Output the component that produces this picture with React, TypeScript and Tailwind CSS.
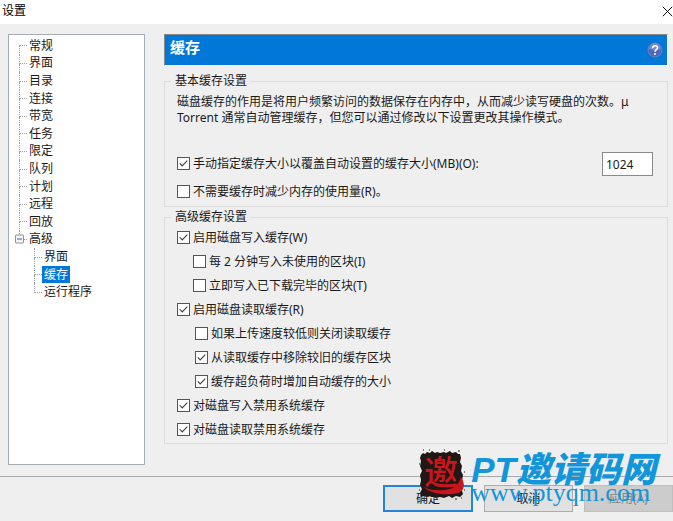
import React, { useState } from "react";

type TreeItem = {
  label: string;
  child?: boolean;
  expandable?: boolean;
  last?: boolean;
};

const treeItems: TreeItem[] = [
  { label: "常规" },
  { label: "界面" },
  { label: "目录" },
  { label: "连接" },
  { label: "带宽" },
  { label: "任务" },
  { label: "限定" },
  { label: "队列" },
  { label: "计划" },
  { label: "远程" },
  { label: "回放" },
  { label: "高级", expandable: true, last: true },
  { label: "界面", child: true },
  { label: "缓存", child: true },
  { label: "运行程序", child: true, last: true },
];

const TreeRow: React.FC<{
  item: TreeItem;
  selected: boolean;
  first: boolean;
  onSelect: () => void;
}> = ({ item, selected, first, onSelect }) => (
  <li className={`flex items-center ${item.child ? "pl-[15px]" : ""}`}>
    {/* Dotted connector lines */}
    <span className="relative flex h-full w-2 flex-col">
      <span
        className={`flex-1 border-b border-dotted border-[#a0a0a0] ${
          first ? "" : "border-l"
        }`}
      />
      <span
        className={`flex-1 border-dotted border-[#a0a0a0] ${
          item.last ? "" : "border-l"
        }`}
      />
      {item.expandable && (
        <span className="absolute top-1/2 -left-1 flex size-[9px] -translate-y-1/2 items-center justify-center rounded-[1px] border border-[#919191] bg-[#f4f4f4]">
          <span className="h-px w-[5px] bg-[#4b63a7]" />
        </span>
      )}
    </span>
    <button
      type="button"
      onClick={onSelect}
      className={`h-full px-[2px] leading-4 ${
        selected ? "bg-[#0078d7] text-white" : ""
      }`}
    >
      {item.label}
    </button>
  </li>
);

const CheckRow: React.FC<{
  id: string;
  label: string;
  checked?: boolean;
}> = ({ id, label, checked = false }) => (
  <div className="flex h-6 items-center gap-[3px]">
    <span className="grid shrink-0 pb-[2px]">
      <input
        id={id}
        type="checkbox"
        defaultChecked={checked}
        className="peer col-start-1 row-start-1 size-[13px] appearance-none border border-[#555555] bg-white"
      />
      <svg
        viewBox="0 0 13 13"
        className="pointer-events-none invisible col-start-1 row-start-1 size-[13px] peer-checked:visible"
      >
        <path
          d="M2.8 6.4 5.2 8.9 10.3 3.6"
          fill="none"
          stroke="#444"
          strokeWidth="1.2"
        />
      </svg>
    </span>
    <label htmlFor={id}>{label}</label>
  </div>
);

const Watermark: React.FC = () => (
  <div className="pointer-events-none absolute right-[17px] bottom-[21px] flex items-end gap-[6px]">
    <svg viewBox="0 0 46 50" className="h-[50px] w-[46px] overflow-visible">
      <path
        d="M2 5 4 3 6 4 8 2 11 3 13 1 16 3 18 2 21 3 25 2 27 3 31 1 33 3 37 2 39 4 41 4 42 8 41 12 43 16 42 21 44 25 43 31 44 36 43 41 44 44 41 47 37 46 33 48 30 46 25 48 21 47 17 48 12 46 8 47 4 46 2 47 1 43 3 39 1 35 2 30 1 25 3 21 1 16 2 11 1 8Z"
        fill="#211816"
      />
      <path
        d="M4 0h1M0 14h1M36 49h2M45 40h1M10 0h1M17 49h2M0 40h1M39 1h2M45 22h1M25 0h1M7 49h1M42 48h1"
        stroke="#211816"
      />
      <text
        x="5"
        y="35"
        fontSize="34"
        fontWeight="500"
        fill="#c8161d"
        className="font-['Noto_Sans_CJK_SC',sans-serif]"
      >
        邀
      </text>
      <path
        d="M3 34C5 38 10 40 18 40 28 41 39 39 42 27 47 34 45 41 39 43 28 46 7 44 3 34Z"
        fill="#c8161d"
      />
    </svg>
    <div className="flex flex-col text-[#1296db]">
      <span className="font-['Liberation_Sans','Noto_Sans_CJK_SC',sans-serif] text-[35px] leading-8 font-black whitespace-nowrap italic">
        PT邀请码网
      </span>
      <span className="font-['Liberation_Serif',serif] text-[26px] leading-[14px]">
        www.ptyqm.com
      </span>
    </div>
  </div>
);

const App: React.FC = () => {
  const [selected, setSelected] = useState(13);
  const [cacheSize, setCacheSize] = useState("1024");

  return (
    <div className="flex min-h-screen flex-col bg-[#efefef] font-['Noto_Sans','Noto_Sans_CJK_SC',sans-serif] text-[12px] leading-4 text-[#1a1a1a]">
      <header className="flex h-6 items-center justify-between bg-white pb-[2px] pl-[2px]">
        <h1 className="text-black">设置</h1>
        <button type="button" aria-label="关闭">
          <svg viewBox="0 0 11 11" className="size-[11px]">
            <path d="M.8.8 10.2 10.2M10.2.8.8 10.2" stroke="#111" />
          </svg>
        </button>
      </header>

      <main className="flex flex-1 gap-[19px] pt-[10px] pr-[5px] pb-[11px] pl-2">
        <nav className="w-[137px] shrink-0 border border-[#a5acb2] bg-white pl-[10px]">
          <ul className="grid h-[266px] auto-rows-fr pt-[2px]">
            {treeItems.map((item, i) => (
              <TreeRow
                key={i}
                item={item}
                first={i === 0}
                selected={selected === i}
                onSelect={() => setSelected(i)}
              />
            ))}
          </ul>
        </nav>

        <section className="flex min-w-0 flex-1 flex-col">
          <div className="flex h-8 justify-between border border-t-[#888] border-r-white border-b-white border-l-[#888] bg-[#0078d7] pr-1 pl-[5px]">
            <h2 className="pt-1 text-[15px] leading-4 font-bold text-white">
              缓存
            </h2>
            <button type="button" aria-label="帮助">
              <svg viewBox="0 0 16 16" className="size-4">
                <circle cx="8" cy="8" r="7" fill="#4d68bd" stroke="#7182b8" />
                <path d="M2 7a6 6 0 0 1 12 0Q8 9 2 7Z" fill="#7389cd" />
                <path
                  d="M5.6 6.2C5.6 3 10.5 3 10.5 5.8 10.5 7.6 8 7.6 8 9.7"
                  fill="none"
                  stroke="#fff"
                  strokeWidth="1.6"
                />
                <circle cx="8" cy="12" r="1" fill="#fff" />
              </svg>
            </button>
          </div>

          <fieldset className="mt-[7px] min-w-0 border border-[#dcdcdc] pb-[2px] pl-3">
            <legend className="-ml-[6px] px-1">基本缓存设置</legend>
            <p className="pt-[5px]">
              磁盘缓存的作用是将用户频繁访问的数据保存在内存中，从而减少读写硬盘的次数。μ
              <br />
              Torrent 通常自动管理缓存，但您可以通过修改以下设置更改其操作模式。
            </p>
            <div className="mt-[26px] flex items-center justify-between pr-[14px]">
              <CheckRow
                id="manual"
                label="手动指定缓存大小以覆盖自动设置的缓存大小(MB)(O):"
                checked
              />
              <input
                type="text"
                aria-label="缓存大小"
                value={cacheSize}
                onChange={(e) => setCacheSize(e.target.value)}
                className="h-6 w-[51px] border border-[#8a8a8a] bg-white px-[3px]"
              />
            </div>
            <div className="mt-1">
              <CheckRow id="reduce" label="不需要缓存时减少内存的使用量(R)。" />
            </div>
          </fieldset>

          <fieldset className="mt-[2px] min-w-0 border border-[#dcdcdc] pt-px pb-px pl-3">
            <legend className="-ml-[6px] px-1">高级缓存设置</legend>
            <CheckRow id="write" label="启用磁盘写入缓存(W)" checked />
            <div className="pl-4">
              <CheckRow id="unused" label="每 2 分钟写入未使用的区块(I)" />
              <CheckRow id="finished" label="立即写入已下载完毕的区块(T)" />
            </div>
            <CheckRow id="read" label="启用磁盘读取缓存(R)" checked />
            <div className="pl-[18px]">
              <CheckRow id="slow" label="如果上传速度较低则关闭读取缓存" />
              <CheckRow id="old" label="从读取缓存中移除较旧的缓存区块" checked />
              <CheckRow id="grow" label="缓存超负荷时增加自动缓存的大小" checked />
            </div>
            <CheckRow id="nowrite" label="对磁盘写入禁用系统缓存" checked />
            <CheckRow id="noread" label="对磁盘读取禁用系统缓存" checked />
          </fieldset>
        </section>
      </main>

      <footer className="relative flex justify-end gap-[11px] border-t border-[#a8a8a8] pt-2 pb-[9px]">
        <button
          type="button"
          className="h-[27px] w-[90px] border-2 border-[#2385d8] bg-[#e1e1e1]"
        >
          确定
        </button>
        <button
          type="button"
          className="h-[27px] w-[89px] border border-[#adadad] bg-[#e1e1e1]"
        >
          取消
        </button>
        <button
          type="button"
          disabled
          className="h-[27px] w-[89px] border border-[#bfbfbf] bg-[#cccccc] text-[#838383]"
        >
          应用(A)
        </button>
        <Watermark />
      </footer>
    </div>
  );
};

export default App;
